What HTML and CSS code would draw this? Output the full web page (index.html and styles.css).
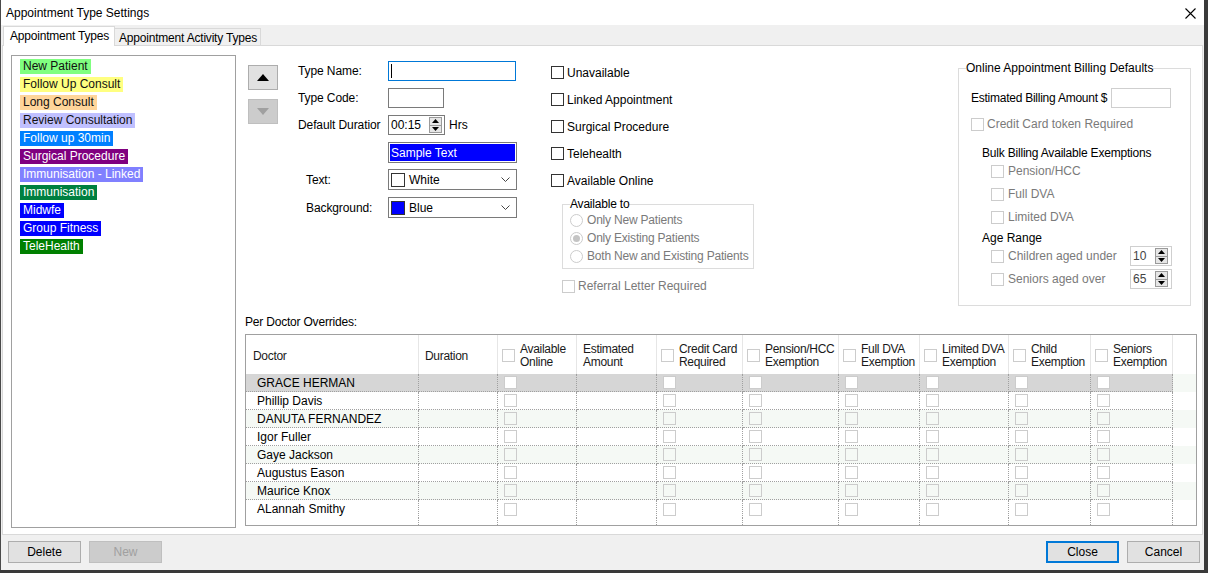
FILE: index.html
```html
<!DOCTYPE html>
<html>
<head>
<meta charset="utf-8">
<title>Appointment Type Settings</title>
<link rel="stylesheet" href="styles.css">
</head>
<body>
<div class="window">
  <div class="titlebar">
    <span class="title">Appointment Type Settings</span>
    <svg class="close-x" width="11" height="11" viewBox="0 0 11 11"><path d="M0.5 0.5 L10.5 10.5 M10.5 0.5 L0.5 10.5" stroke="#000" stroke-width="1.1" fill="none"/></svg>
  </div>
  <div class="tabs">
    <div class="tab active">Appointment Types</div>
    <div class="tab">Appointment Activity Types</div>
  </div>
  <div class="panel">
    <div class="typelist">
      <div class="item"><span class="lbl" style="background:#80ff80">New Patient</span></div>
      <div class="item"><span class="lbl" style="background:#ffff80">Follow Up Consult</span></div>
      <div class="item"><span class="lbl" style="background:#ffd59a">Long Consult</span></div>
      <div class="item"><span class="lbl" style="background:#c0c0ff">Review Consultation</span></div>
      <div class="item"><span class="lbl light" style="background:#0080ff">Follow up 30min</span></div>
      <div class="item"><span class="lbl light" style="background:#800080">Surgical Procedure</span></div>
      <div class="item"><span class="lbl light" style="background:#8080ff">Immunisation - Linked</span></div>
      <div class="item"><span class="lbl light" style="background:#008040">Immunisation</span></div>
      <div class="item"><span class="lbl light" style="background:#0000ff">Midwfe</span></div>
      <div class="item"><span class="lbl light" style="background:#0000ff">Group Fitness</span></div>
      <div class="item"><span class="lbl light" style="background:#008000">TeleHealth</span></div>
    </div>
    <div class="main">
      <div class="upper">
        <div class="arrows">
          <div class="arrow-btn"><svg width="12" height="7" viewBox="0 0 12 7"><polygon points="0,7 12,7 6,0" fill="#000"/></svg></div>
          <div class="arrow-btn dis"><svg width="12" height="7" viewBox="0 0 12 7"><polygon points="0,0 12,0 6,7" fill="#a0a0a0"/></svg></div>
        </div>
        <div class="form">
          <div class="flabel">Type Name:</div>
          <div class="fctl"><div class="input focus w128"><span class="caret"></span></div></div>
          <div class="flabel">Type Code:</div>
          <div class="fctl"><div class="input w55"></div></div>
          <div class="flabel">Default Duratior</div>
          <div class="fctl">
            <div class="input w56 dur"><span>00:15</span>
              <div class="spin">
                <span><svg width="7" height="4" viewBox="0 0 7 4"><polygon points="0,4 7,4 3.5,0" fill="#000"/></svg></span>
                <span><svg width="7" height="4" viewBox="0 0 7 4"><polygon points="0,0 7,0 3.5,4" fill="#000"/></svg></span>
              </div>
            </div>
            <span class="hrs">Hrs</span>
          </div>
          <div class="flabel"></div>
          <div class="fctl"><div class="sample"><div class="sample-in">Sample Text</div></div></div>
          <div class="flabel indent">Text:</div>
          <div class="fctl"><div class="combo"><span class="swatch" style="background:#fff"></span><span>White</span><svg class="chev" width="9" height="5" viewBox="0 0 9 5"><polyline points="0.5,0.5 4.5,4.5 8.5,0.5" stroke="#444" fill="none"/></svg></div></div>
          <div class="flabel indent">Background:</div>
          <div class="fctl"><div class="combo"><span class="swatch" style="background:#0000ff"></span><span>Blue</span><svg class="chev" width="9" height="5" viewBox="0 0 9 5"><polyline points="0.5,0.5 4.5,4.5 8.5,0.5" stroke="#444" fill="none"/></svg></div></div>
        </div>
        <div class="checks">
          <div class="cbrow"><span class="cb"></span><span>Unavailable</span></div>
          <div class="cbrow"><span class="cb"></span><span>Linked Appointment</span></div>
          <div class="cbrow"><span class="cb"></span><span>Surgical Procedure</span></div>
          <div class="cbrow"><span class="cb"></span><span>Telehealth</span></div>
          <div class="cbrow"><span class="cb"></span><span>Available Online</span></div>
          <fieldset class="avail">
            <legend>Available to</legend>
            <div class="rbrow"><span class="rb"></span><span>Only New Patients</span></div>
            <div class="rbrow"><span class="rb on"></span><span>Only Existing Patients</span></div>
            <div class="rbrow"><span class="rb"></span><span>Both New and Existing Patients</span></div>
          </fieldset>
          <div class="refrow"><span class="cb dis"></span><span>Referral Letter Required</span></div>
        </div>
        <fieldset class="billing">
          <legend>Online Appointment Billing Defaults</legend>
          <div class="estrow"><span class="estlabel">Estimated Billing Amount $</span><div class="input dis w59"></div></div>
          <div class="ccrow"><span class="cb dis"></span><span>Credit Card token Required</span></div>
          <div class="bulkhead">Bulk Billing Available Exemptions</div>
          <div class="exrow first"><span class="cb dis"></span><span>Pension/HCC</span></div>
          <div class="exrow"><span class="cb dis"></span><span>Full DVA</span></div>
          <div class="exrow"><span class="cb dis"></span><span>Limited DVA</span></div>
          <div class="agehead">Age Range</div>
          <div class="agerow first"><span class="cb dis"></span><span class="agetext">Children aged under</span>
            <div class="input dis w41 numbox"><span>10</span>
              <div class="spin">
                <span><svg width="7" height="4" viewBox="0 0 7 4"><polygon points="0,4 7,4 3.5,0" fill="#000"/></svg></span>
                <span><svg width="7" height="4" viewBox="0 0 7 4"><polygon points="0,0 7,0 3.5,4" fill="#000"/></svg></span>
              </div>
            </div>
          </div>
          <div class="agerow"><span class="cb dis"></span><span class="agetext">Seniors aged over</span>
            <div class="input dis w41 numbox"><span>65</span>
              <div class="spin">
                <span><svg width="7" height="4" viewBox="0 0 7 4"><polygon points="0,4 7,4 3.5,0" fill="#000"/></svg></span>
                <span><svg width="7" height="4" viewBox="0 0 7 4"><polygon points="0,0 7,0 3.5,4" fill="#000"/></svg></span>
              </div>
            </div>
          </div>
        </fieldset>
      </div>
      <div class="ov-label">Per Doctor Overrides:</div>
      <div class="grid-wrap">
        <table class="grid">
          <colgroup>
            <col style="width:173px"><col style="width:79px"><col style="width:79px"><col style="width:80px"><col style="width:86px"><col style="width:96px"><col style="width:81px"><col style="width:89px"><col style="width:82px"><col style="width:82px"><col style="width:23px">
          </colgroup>
          <thead>
            <tr>
              <th><div class="hc plain doc">Doctor</div></th>
              <th><div class="hc plain">Duration</div></th>
              <th><div class="hc"><span class="cb dis"></span><span>Available<br>Online</span></div></th>
              <th><div class="hc plain">Estimated<br>Amount</div></th>
              <th><div class="hc"><span class="cb dis"></span><span>Credit Card<br>Required</span></div></th>
              <th><div class="hc"><span class="cb dis"></span><span>Pension/HCC<br>Exemption</span></div></th>
              <th><div class="hc"><span class="cb dis"></span><span>Full DVA<br>Exemption</span></div></th>
              <th><div class="hc"><span class="cb dis"></span><span>Limited DVA<br>Exemption</span></div></th>
              <th><div class="hc"><span class="cb dis"></span><span>Child<br>Exemption</span></div></th>
              <th><div class="hc"><span class="cb dis"></span><span>Seniors<br>Exemption</span></div></th>
              <th class="fill"><div class="hc"></div></th>
            </tr>
          </thead>
          <tbody>
            <tr class="alt sel">
              <td><div class="c name">GRACE HERMAN</div></td><td><div class="c"></div></td><td><div class="c cbc"><span class="cb dis"></span></div></td><td><div class="c"></div></td><td><div class="c cbc"><span class="cb dis"></span></div></td><td><div class="c cbc"><span class="cb dis"></span></div></td><td><div class="c cbc"><span class="cb dis"></span></div></td><td><div class="c cbc"><span class="cb dis"></span></div></td><td><div class="c cbc"><span class="cb dis"></span></div></td><td><div class="c cbc"><span class="cb dis"></span></div></td><td class="fill"><div class="c"></div></td>
            </tr>
            <tr>
              <td><div class="c name">Phillip Davis</div></td><td><div class="c"></div></td><td><div class="c cbc"><span class="cb dis"></span></div></td><td><div class="c"></div></td><td><div class="c cbc"><span class="cb dis"></span></div></td><td><div class="c cbc"><span class="cb dis"></span></div></td><td><div class="c cbc"><span class="cb dis"></span></div></td><td><div class="c cbc"><span class="cb dis"></span></div></td><td><div class="c cbc"><span class="cb dis"></span></div></td><td><div class="c cbc"><span class="cb dis"></span></div></td><td class="fill"><div class="c"></div></td>
            </tr>
            <tr class="alt">
              <td><div class="c name">DANUTA FERNANDEZ</div></td><td><div class="c"></div></td><td><div class="c cbc"><span class="cb dis"></span></div></td><td><div class="c"></div></td><td><div class="c cbc"><span class="cb dis"></span></div></td><td><div class="c cbc"><span class="cb dis"></span></div></td><td><div class="c cbc"><span class="cb dis"></span></div></td><td><div class="c cbc"><span class="cb dis"></span></div></td><td><div class="c cbc"><span class="cb dis"></span></div></td><td><div class="c cbc"><span class="cb dis"></span></div></td><td class="fill"><div class="c"></div></td>
            </tr>
            <tr>
              <td><div class="c name">Igor Fuller</div></td><td><div class="c"></div></td><td><div class="c cbc"><span class="cb dis"></span></div></td><td><div class="c"></div></td><td><div class="c cbc"><span class="cb dis"></span></div></td><td><div class="c cbc"><span class="cb dis"></span></div></td><td><div class="c cbc"><span class="cb dis"></span></div></td><td><div class="c cbc"><span class="cb dis"></span></div></td><td><div class="c cbc"><span class="cb dis"></span></div></td><td><div class="c cbc"><span class="cb dis"></span></div></td><td class="fill"><div class="c"></div></td>
            </tr>
            <tr class="alt">
              <td><div class="c name">Gaye Jackson</div></td><td><div class="c"></div></td><td><div class="c cbc"><span class="cb dis"></span></div></td><td><div class="c"></div></td><td><div class="c cbc"><span class="cb dis"></span></div></td><td><div class="c cbc"><span class="cb dis"></span></div></td><td><div class="c cbc"><span class="cb dis"></span></div></td><td><div class="c cbc"><span class="cb dis"></span></div></td><td><div class="c cbc"><span class="cb dis"></span></div></td><td><div class="c cbc"><span class="cb dis"></span></div></td><td class="fill"><div class="c"></div></td>
            </tr>
            <tr>
              <td><div class="c name">Augustus Eason</div></td><td><div class="c"></div></td><td><div class="c cbc"><span class="cb dis"></span></div></td><td><div class="c"></div></td><td><div class="c cbc"><span class="cb dis"></span></div></td><td><div class="c cbc"><span class="cb dis"></span></div></td><td><div class="c cbc"><span class="cb dis"></span></div></td><td><div class="c cbc"><span class="cb dis"></span></div></td><td><div class="c cbc"><span class="cb dis"></span></div></td><td><div class="c cbc"><span class="cb dis"></span></div></td><td class="fill"><div class="c"></div></td>
            </tr>
            <tr class="alt">
              <td><div class="c name">Maurice Knox</div></td><td><div class="c"></div></td><td><div class="c cbc"><span class="cb dis"></span></div></td><td><div class="c"></div></td><td><div class="c cbc"><span class="cb dis"></span></div></td><td><div class="c cbc"><span class="cb dis"></span></div></td><td><div class="c cbc"><span class="cb dis"></span></div></td><td><div class="c cbc"><span class="cb dis"></span></div></td><td><div class="c cbc"><span class="cb dis"></span></div></td><td><div class="c cbc"><span class="cb dis"></span></div></td><td class="fill"><div class="c"></div></td>
            </tr>
            <tr class="last">
              <td><div class="c name">ALannah Smithy</div></td><td><div class="c"></div></td><td><div class="c cbc"><span class="cb dis"></span></div></td><td><div class="c"></div></td><td><div class="c cbc"><span class="cb dis"></span></div></td><td><div class="c cbc"><span class="cb dis"></span></div></td><td><div class="c cbc"><span class="cb dis"></span></div></td><td><div class="c cbc"><span class="cb dis"></span></div></td><td><div class="c cbc"><span class="cb dis"></span></div></td><td><div class="c cbc"><span class="cb dis"></span></div></td><td class="fill"><div class="c"></div></td>
            </tr>
            <tr class="pad">
              <td></td><td></td><td></td><td></td><td></td><td></td><td></td><td></td><td></td><td></td><td class="fill"></td>
            </tr>
          </tbody>
        </table>
      </div>
    </div>
  </div>
  <div class="footer">
    <div class="btn">Delete</div>
    <div class="btn dis">New</div>
    <div class="spacer"></div>
    <div class="btn default">Close</div>
    <div class="btn">Cancel</div>
  </div>
</div>
</body>
</html>
```

FILE: styles.css
```css
* { box-sizing: border-box; }
html, body { margin: 0; padding: 0; }
body {
  background: #3a3a3a;
  font-family: "Liberation Sans", Arial, sans-serif;
  font-size: 12px;
  color: #000;
  width: 1208px;
  height: 573px;
  overflow: hidden;
}
.window {
  width: 1204px;
  height: 570px;
  background: #f0f0f0;
  border-left: 1px solid #4a4a4a;
  display: flex;
  flex-direction: column;
}
.titlebar {
  height: 25px;
  background: #fff;
  display: flex;
  align-items: center;
  justify-content: space-between;
  padding: 1px 8px 0 5px;
}
.title { font-size: 12px; }
.close-x { display: block; }

.tabs {
  height: 20px;
  display: flex;
  align-items: flex-end;
  padding-left: 2px;
}
.tab {
  height: 17px;
  width: 146px;
  background: #f0f0f0;
  border: 1px solid #d9d9d9;
  border-bottom: none;
  border-left: none;
  padding: 1px 0 0 4px;
  line-height: 16px;
  white-space: nowrap;
  letter-spacing: -0.2px;
}
.tab.active {
  width: 112px;
  height: 20px;
  background: #fff;
  border-left: 1px solid #d9d9d9;
  margin-bottom: -1px;
  position: relative;
  z-index: 1;
  padding: 0 0 0 6px;
  line-height: 19px;
}

.panel {
  height: 490px;
  margin: 0 1px 0 1px;
  background: #fff;
  border: 1px solid #d9d9d9;
  display: flex;
  padding: 9px 0 0 8px;
}
.typelist {
  width: 225px;
  height: 473px;
  border: 1px solid #a0a0a0;
  padding: 3px 0 0 8px;
  flex: none;
}
.item { height: 18px; }
.lbl {
  display: inline-block;
  height: 15px;
  line-height: 15px;
  padding: 0 3px;
  color: #111;
  white-space: nowrap;
}
.lbl.light { color: #fff; }

.main {
  margin-left: 9px;
  width: 952px;
  display: flex;
  flex-direction: column;
}
.upper {
  height: 260px;
  display: flex;
}
.arrows {
  width: 30px;
  margin: 10px 20px 0 3px;
  display: flex;
  flex-direction: column;
  gap: 9px;
}
.arrow-btn {
  width: 30px;
  height: 25px;
  background: #e1e1e1;
  border: 1px solid #adadad;
  display: flex;
  align-items: center;
  justify-content: center;
}
.arrow-btn.dis { background: #cccccc; border-color: #bfbfbf; }

.form {
  width: 253px;
  padding-top: 6px;
  display: grid;
  grid-template-columns: 90px 1fr;
  grid-template-rows: 20px 20px 20px 20px 21px 21px;
  row-gap: 7px;
  align-content: start;
}
.flabel { align-self: center; white-space: nowrap; letter-spacing: -0.1px; }
.flabel.indent { padding-left: 8px; }
.fctl { display: flex; align-items: center; gap: 4px; }
.input {
  height: 20px;
  border: 1px solid #7a7a7a;
  background: #fff;
  display: flex;
  align-items: center;
}
.input.focus { border-color: #0078d7; }
.input.dis { border-color: #cfcfcf; }
.w128 { width: 128px; }
.w55 { width: 56px; }
.w56 { width: 57px; }
.w59 { width: 60px; }
.w41 { width: 42px; }
.caret { width: 1px; height: 14px; background: #000; margin-left: 2px; }
.dur { justify-content: space-between; padding: 0 2px 0 2px; }
.spin {
  width: 13px;
  height: 16px;
  display: flex;
  flex-direction: column;
}
.spin span {
  flex: 1;
  border: 1px solid #9a9a9a;
  background: #e6e6e6;
  display: flex;
  align-items: center;
  justify-content: center;
}
.spin span + span { border-top: none; }
.spin svg { display: block; }
.sample {
  width: 129px;
  height: 21px;
  border: 1px solid #7a7a7a;
  padding: 1px;
  background: #fff;
}
.sample-in {
  height: 100%;
  background: #0000ff;
  color: #fff;
  line-height: 18px;
  padding-left: 1px;
}
.combo {
  width: 129px;
  height: 21px;
  border: 1px solid #7a7a7a;
  background: #fff;
  display: flex;
  align-items: center;
  padding: 0 6px 0 2px;
  gap: 4px;
}
.swatch {
  width: 14px;
  height: 14px;
  border: 1px solid #333;
  flex: none;
}
.chev { margin-left: auto; display: block; }

.checks {
  width: 407px;
  padding-top: 4px;
  display: flex;
  flex-direction: column;
}
.cbrow { height: 27px; display: flex; align-items: center; gap: 3px; }
.cb {
  width: 13px;
  height: 13px;
  border: 1px solid #333;
  background: #fff;
  flex: none;
  display: inline-block;
}
.cb.dis { border-color: #cccccc; background: transparent; }
fieldset {
  margin: 0;
  border: 1px solid #dcdcdc;
  min-width: 0;
}
legend { padding: 0; line-height: 14px; height: 14px; }
.avail {
  margin: 3px 0 0 11px;
  width: 192px;
  padding: 0 7px 3px 7px;
  color: #7a7a7a;
  letter-spacing: -0.2px;
}
.avail legend { color: #000; }
.rbrow { height: 18px; display: flex; align-items: center; gap: 4px; white-space: nowrap; }
.rb {
  width: 13px;
  height: 13px;
  border: 1px solid #cccccc;
  border-radius: 50%;
  flex: none;
  display: flex;
  align-items: center;
  justify-content: center;
}
.rb.on::after {
  content: "";
  width: 7px;
  height: 7px;
  border-radius: 50%;
  background: #c4c4c4;
}
.refrow {
  margin: 10px 0 0 11px;
  height: 14px;
  display: flex;
  align-items: center;
  gap: 3px;
  color: #7a7a7a;
}

.billing {
  margin-top: 6px;
  width: 233px;
  height: 245px;
  padding: 0 7px;
}
.billing legend { color: #000; }
.estrow { margin: 13px 0 0 5px; height: 20px; display: flex; align-items: center; }
.estlabel { width: 140px; white-space: nowrap; letter-spacing: -0.25px; }
.ccrow { margin: 9px 0 0 5px; height: 14px; display: flex; align-items: center; gap: 3px; color: #7a7a7a; }
.bulkhead { margin: 15px 0 0 16px; height: 14px; line-height: 14px; letter-spacing: -0.2px; }
.exrow { margin: 9px 0 0 25px; height: 14px; display: flex; align-items: center; gap: 4px; color: #7a7a7a; }
.exrow.first { margin-top: 4px; }
.agehead { margin: 7px 0 0 16px; height: 14px; line-height: 14px; }
.agerow { margin: 3px 0 0 25px; height: 20px; display: flex; align-items: center; gap: 4px; color: #7a7a7a; }
.agerow.first { margin-top: 1px; }
.agetext { width: 118px; white-space: nowrap; }
.numbox { justify-content: space-between; padding: 0 3px 0 2px; color: #444; }

.ov-label { height: 14px; line-height: 14px; margin-bottom: 5px; letter-spacing: -0.2px; }
.grid-wrap {
  width: 952px;
  height: 192px;
  border: 1px solid #a0a0a0;
  background: #fff;
  overflow: hidden;
}
.grid {
  width: 950px;
  table-layout: fixed;
  border-collapse: separate;
  border-spacing: 0;
}
.grid th, .grid td { padding: 0; }
.grid th {
  font-weight: normal;
  text-align: left;
  border-right: 1px solid #e6e6e6;
  color: #1a1a1a;
}
.grid th.fill, .grid td.fill { border-right: none; }
.hc {
  height: 39px;
  display: flex;
  align-items: center;
  gap: 5px;
  padding: 3px 0 0 4px;
  line-height: 13px;
  white-space: nowrap;
  letter-spacing: -0.3px;
  overflow: hidden;
}
.hc .cb { margin-top: -2px; }
.hc.plain { padding-left: 6px; }
.hc.doc { padding-left: 7px; }
.grid td {
  border-right: 1px dotted #a0a0a0;
  border-bottom: 1px dotted #a0a0a0;
}
.grid td.fill { border-bottom: none; }
.grid tr.last td, .grid tr.pad td { border-bottom: none; }
.c {
  height: 17px;
  display: flex;
  align-items: center;
  white-space: nowrap;
  overflow: hidden;
}
.grid tr.last .c { height: 18px; }
.grid tr.pad td { height: 7px; }
.c.name { padding-left: 11px; }
.c.cbc { padding-left: 6px; }
.grid tr.alt td { background: #f5f9f5; }
.grid tr.sel td { background: #d6d6d6; }
.grid tr.sel td.fill { background: #f5f9f5; }
.grid tr.sel .cb { background: #fff; }

.footer {
  height: 35px;
  display: flex;
  align-items: flex-start;
  padding: 6px 4px 0 7px;
  gap: 8px;
}
.btn {
  width: 73px;
  height: 22px;
  background: #e1e1e1;
  border: 1px solid #adadad;
  text-align: center;
  line-height: 21px;
}
.btn.dis { background: #cccccc; border-color: #bfbfbf; color: #a0a0a0; }
.btn.default { border: 2px solid #0078d7; line-height: 19px; }
.spacer { flex: 1; }
```
